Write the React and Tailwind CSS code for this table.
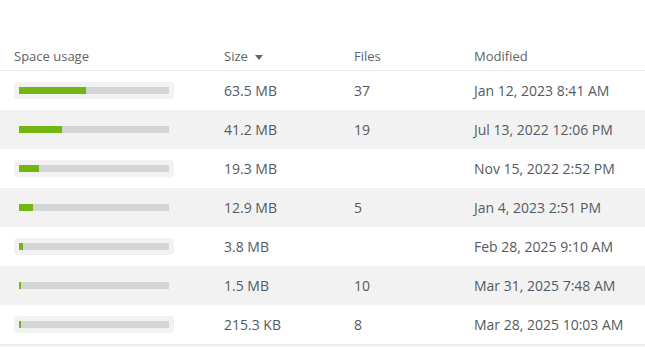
export default function App() {
  const rows = [
    { pct: 67, size: "63.5 MB", files: "37", mod: "Jan 12, 2023 8:41 AM" },
    { pct: 43, size: "41.2 MB", files: "19", mod: "Jul 13, 2022 12:06 PM" },
    { pct: 20, size: "19.3 MB", files: "", mod: "Nov 15, 2022 2:52 PM" },
    { pct: 14, size: "12.9 MB", files: "5", mod: "Jan 4, 2023 2:51 PM" },
    { pct: 4, size: "3.8 MB", files: "", mod: "Feb 28, 2025 9:10 AM" },
    { pct: 2, size: "1.5 MB", files: "10", mod: "Mar 31, 2025 7:48 AM" },
    { pct: 1.5, size: "215.3 KB", files: "8", mod: "Mar 28, 2025 10:03 AM" },
  ];
  return (
    <div className="w-[645px] h-[347px] overflow-hidden bg-white font-['Open_Sans',sans-serif]">
      <div className="h-[44px]" />
      <div className="flex items-center h-[27px] border-b border-[#e8e8e8] text-[13px] text-[#5f6368]">
        <div className="w-[224px] pl-[14px]">Space usage</div>
        <div className="w-[130px] flex items-center">
          Size
          <svg width="8" height="5" viewBox="0 0 8 5" className="ml-[7px] mt-[1px]">
            <path d="M0 0 L8 0 L4 5 Z" fill="#666" />
          </svg>
        </div>
        <div className="w-[120px]">Files</div>
        <div>Modified</div>
      </div>
      {rows.map((r, i) => (
        <div
          key={i}
          className={`flex items-center h-[39px] text-[14px] text-[#555a60] ${i % 2 === 1 ? "bg-[#f2f2f2]" : "bg-white"}`}
        >
          <div className="w-[224px] pl-[14px]">
            <div className="w-[160px] h-[17px] rounded-[4px] bg-[#f2f2f2] flex items-center pl-[5px]">
              <div className="w-[150px] h-[7px] bg-[#d3d5d8] flex">
                <div className="h-full bg-[#72b611]" style={{ width: `${r.pct}px` }} />
              </div>
            </div>
          </div>
          <div className="w-[130px]">{r.size}</div>
          <div className="w-[120px]">{r.files}</div>
          <div>{r.mod}</div>
        </div>
      ))}
      <div className="h-[8px] bg-[#f2f2f2] border-t border-[#e8e8e8]" />
    </div>
  );
}
